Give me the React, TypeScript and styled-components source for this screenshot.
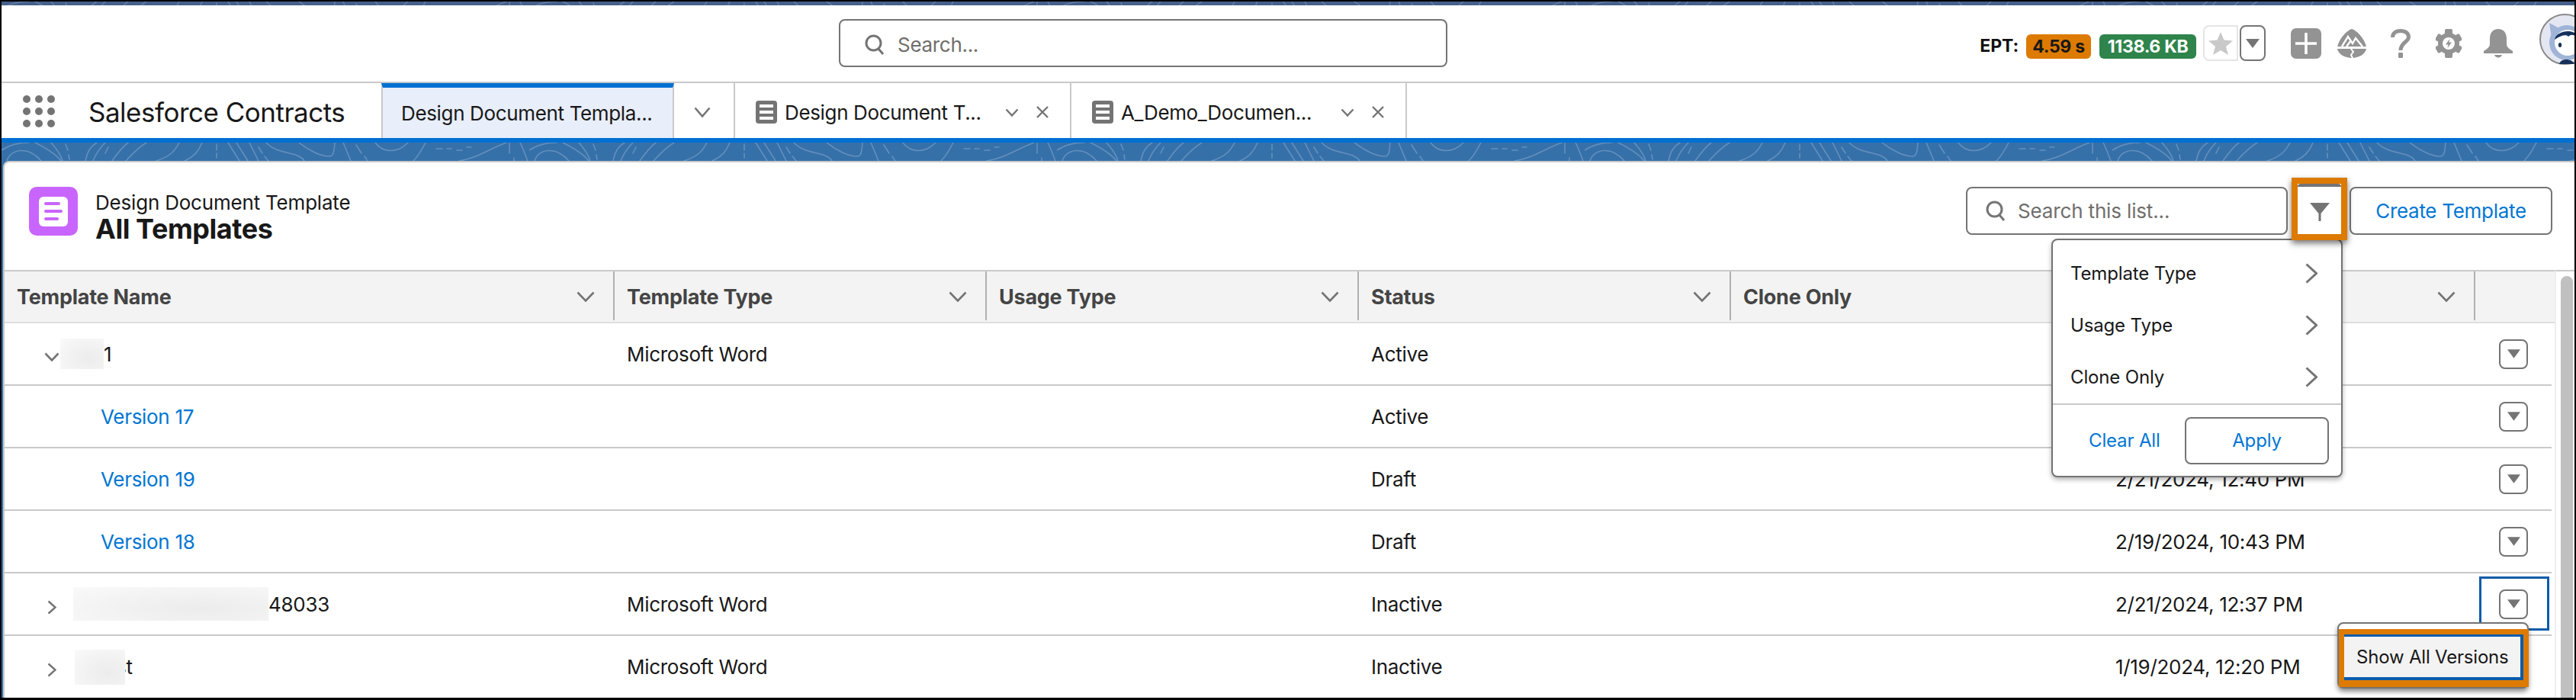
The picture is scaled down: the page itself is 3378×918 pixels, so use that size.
import React from "react";
import styled, { createGlobalStyle } from "styled-components";

const Global = createGlobalStyle`
  html, body { margin: 0; padding: 0; background: #000; }
  * { box-sizing: border-box; }
  body { font-family: Inter, "Liberation Sans", sans-serif; color: #181818; }
`;

const Page = styled.div`
  width: 3378px; height: 918px; padding: 2px 2px 3px 2px; background: #000;
  display: flex; flex-direction: column; overflow: hidden; font-size: 26px; letter-spacing: -0.3px;
`;
const Strip = styled.div`height: 5px; background: #45608a; overflow: hidden; flex: none;`;
const TopBar = styled.header`
  height: 102px; flex: none; background: #fff; border-bottom: 2px solid #c9c9c9;
  display: flex; align-items: flex-start; overflow: hidden; position: relative;
`;
const GlobalSearch = styled.div`
  width: 798px; height: 63px; margin: 18px 0 0 1098px; border: 2px solid #747474; border-radius: 8px;
  display: flex; align-items: center; gap: 17px; padding: 3px 0 0 32px; color: #706e6b;
`;
const Metrics = styled.div`
  margin-left: auto; display: flex; align-items: flex-start; padding-top: 26px; margin-right: -21px;
`;
const Ept = styled.span`
  font-weight: 700; font-size: 23px; letter-spacing: -0.1px; margin-top: 13px; margin-right: 10px; line-height: 28px; color: #111;
`;
const Pill = styled.span<{ $bg: string; $fg: string; $w: number }>`
  width: ${p => p.$w}px; height: 32px; margin-top: 12px; border-radius: 6px; background: ${p => p.$bg}; color: ${p => p.$fg};
  display: flex; align-items: center; justify-content: center; font-weight: 700; font-size: 23px; letter-spacing: -0.3px;
`;
const PillGap = styled.span`width: 11px;`;
const StarBox = styled.span`
  width: 46px; height: 47px; margin-left: 9px; border: 2px solid #e5e5e5; border-radius: 8px 0 0 8px;
  display: flex; align-items: center; justify-content: center;
`;
const CaretBox = styled.span`
  width: 34px; height: 47px; margin-left: 2px; border: 2px solid #747474; border-radius: 8px;
  display: flex; align-items: center; justify-content: center;
`;
const IconSlot = styled.span<{ $ml: number; $mt: number }>`
  display: flex; margin-left: ${p => p.$ml}px; margin-top: ${p => p.$mt}px;
`;
const TabBar = styled.nav`height: 72px; flex: none; background: #fff; display: flex; align-items: stretch;`;
const Launcher = styled.div`
  width: 498px; display: flex; align-items: center; padding: 4px 0 0 28px; flex: none;
`;
const Dots = styled.div`display: grid; grid-template-columns: repeat(3, 10px); gap: 6px; margin-top: -3px;`;
const Dot = styled.i`width: 10px; height: 10px; border-radius: 50%; background: #747474; display: block;`;
const AppName = styled.div`margin-left: 44px; font-size: 35px; letter-spacing: -0.5px; white-space: nowrap; color: #181818;`;
const ActiveTab = styled.div`
  width: 384px; flex: none; background: #e8eefa; border-top: 6px solid #0070d2; border-left: 2px solid #c9c9c9; border-right: 2px solid #c9c9c9;
  display: flex; align-items: center; padding-left: 24px; white-space: nowrap; letter-spacing: -0.35px;
`;
const OverflowTab = styled.div`
  width: 80px; flex: none; border-right: 2px solid #c9c9c9; display: flex; align-items: center; justify-content: center; padding: 4px 4px 0 0;
`;
const Tab = styled.div<{ $w: number }>`
  width: ${p => p.$w}px; flex: none; border-right: 2px solid #c9c9c9; display: flex; align-items: center; padding: 4px 27px 0 27px; white-space: nowrap; letter-spacing: -0.35px;
`;
const TabIcon = styled.div`
  width: 28px; height: 30px; border-radius: 4px; background: #747474; display: flex; flex-direction: column; justify-content: center; gap: 4px; padding: 0 5px; flex: none;
`;
const TabIconLine = styled.i`height: 4px; background: #fff; display: block;`;
const TabLabel = styled.span`margin-left: 10px; flex: 1;`;
const TabClose = styled.span`margin-left: 22px; display: flex;`;
const BlueLine = styled.div`height: 6px; background: #0070d2; flex: none;`;
const Workspace = styled.main`flex: 1; display: flex; flex-direction: column; background: #3670a9; padding-left: 2px; min-height: 0;`;
const Banner = styled.div`height: 24px; flex: none; overflow: hidden; margin-left: -2px;`;
const Card = styled.section`
  flex: 1; min-height: 0; background: #fff; border-top: 2px solid #c9c9c9; border-left: 2px solid #c9c9c9; border-top-left-radius: 8px;
  display: flex; flex-direction: column; position: relative;
`;
const CardHeader = styled.div`
  height: 141px; flex: none; display: flex; align-items: flex-start; padding: 32px 29px 0 32px;
`;
const ObjectIcon = styled.div`
  width: 64px; height: 64px; border-radius: 10px; background: #c965ff; display: flex; align-items: center; justify-content: center; flex: none;
`;
const ObjectIconInner = styled.div`
  width: 38px; height: 39px; border-radius: 6px; background: #fff; display: flex; flex-direction: column; justify-content: center; gap: 6px; padding-left: 7px;
`;
const ObjectLine = styled.i<{ $w: number }>`height: 4px; width: ${p => p.$w}px; border-radius: 2px; background: #c965ff; display: block;`;
const TitleBlock = styled.div`margin: 4px 0 0 23px;`;
const Subtitle = styled.div`font-size: 26px; line-height: 34px; letter-spacing: -0.2px;`;
const Title = styled.h1`margin: 0; font-size: 36px; line-height: 34px; font-weight: 700; letter-spacing: -0.45px;`;
const Toolbar = styled.div`margin-left: auto; display: flex; align-items: flex-start;`;
const ListSearch = styled.div`
  width: 422px; height: 63px; border: 2px solid #747474; border-radius: 8px; display: flex; align-items: center; gap: 16px; padding-left: 24px; color: #706e6b; letter-spacing: -0.15px;
`;
const FilterHighlight = styled.div`
  width: 73px; height: 82px; margin: -12px 3px 0 5px; border: 8px solid #dd7a01; background: #fff; position: relative; z-index: 3;
  box-shadow: 0 4px 8px rgba(0,0,0,.55);
  display: flex; align-items: center; justify-content: center; flex: none;
`;
const FilterInner = styled.div`
  width: 100%; height: 100%; border-top: 4px solid #747474; border-radius: 4px; display: flex; align-items: center; justify-content: center; padding-top: 3px;
`;
const CreateButton = styled.button`
  width: 266px; height: 63px; border: 2px solid #747474; border-radius: 8px; background: #fff; color: #0176d3; font: inherit; letter-spacing: inherit;
`;
const TableZone = styled.div`flex: 1; min-height: 0; display: flex;`;
const Table = styled.div`width: 3344px; flex: none; display: flex; flex-direction: column;`;
const HeaderRow = styled.div`
  display: grid; grid-template-columns: 800px repeat(5, 488px) 104px; height: 70px; background: #f3f3f3; border-top: 2px solid #c9c9c9; border-bottom: 2px solid #ddd; flex: none;
`;
const HeaderCell = styled.div<{ $sep?: boolean }>`
  height: 64px; display: flex; align-items: center; justify-content: space-between; padding: 2px 24px 0 16px;
  border-right: ${p => (p.$sep === false ? "none" : "2px solid #b0b0b0")}; font-weight: 700; color: #444; font-size: 27px; letter-spacing: -0.25px;
`;
const Row = styled.div`
  display: grid; grid-template-columns: 800px repeat(5, 488px) 1fr; height: 82px; border-bottom: 2px solid #c9c9c9; width: 3340px; flex: none; position: relative; align-items: center;
  &:last-child { border-bottom: none; height: 81px; }
`;
const Cell = styled.div`padding-left: 16px; white-space: nowrap;`;
const NameCell = styled.div<{ $pl: number }>`display: flex; align-items: center; padding-left: ${p => p.$pl}px; white-space: nowrap;`;
const Link = styled.a`color: #0176d3; margin-left: 126px;`;
const Toggle = styled.span<{ $w: number; $dy: number }>`
  display: flex; justify-content: center; width: ${p => p.$w}px; flex: none; transform: translateY(${p => p.$dy}px);
`;
const Blurred = styled.span<{ $w: number; $h: number; $ml: number; $mr: number }>`
  width: ${p => p.$w}px; height: ${p => p.$h}px; margin-left: ${p => p.$ml}px; margin-right: ${p => p.$mr}px; position: relative; z-index: 1; flex: none;
  background: radial-gradient(ellipse at 65% 65%, #ececec 0%, #f3f3f3 55%, #fafafa 100%);
`;
const ActionCell = styled.div`display: flex; justify-content: flex-end; padding-right: 31px; position: relative; height: 100%; align-items: center;`;
const RowButton = styled.button`
  width: 38px; height: 39px; padding: 0; border: 2px solid #747474; border-radius: 8px; background: #fff; display: flex; align-items: center; justify-content: center; position: relative;
`;
const FocusBox = styled.div`position: absolute; left: 5px; top: 4px; width: 92px; height: 71px; border: 3px solid #0b5cab;`;
const VersionsMenu = styled.div`
  position: absolute; right: 30px; top: 64px; width: 251px; height: 87px; z-index: 4; background: #fff; border: 2px solid #747474; border-radius: 8px; box-shadow: 0 4px 6px rgba(0,0,0,.45); padding-top: 6px;
`;
const VersionsHighlight = styled.div`
  width: 249px; height: 76px; border: 7px solid #dd7a01; border-bottom-width: 9px; background: #fff; margin-top: 1px;
`;
const VersionsItem = styled.div`
  height: 100%; border-top: 3px solid #0b5cab; border-bottom: 4px solid #0b5cab; border-right: 4px solid #0b5cab; background: #f3f3f3;
  display: flex; align-items: center; padding-left: 16px; font-size: 24px; letter-spacing: -0.2px; white-space: nowrap; color: #181818;
`;
const Track = styled.div`
  flex: 1; border-top: 2px solid #c9c9c9; border-left: 2px solid #eee; padding: 6px 0 0 6px; display: flex; min-width: 0; background: #fff;
`;
const Thumb = styled.div`width: 16px; background: #c0c0c0; border-radius: 8px 8px 0 0;`;
const FilterMenu = styled.div`
  position: absolute; left: 2684px; top: 100px; width: 382px; height: 313px; z-index: 2; background: #fff; border: 2px solid #747474; border-radius: 8px;
  box-shadow: 0 3px 6px rgba(0,0,0,.3); padding-top: 9px; display: flex; flex-direction: column; font-size: 24px; letter-spacing: -0.15px;
`;
const FilterItem = styled.div`height: 68px; flex: none; display: flex; align-items: center; justify-content: space-between; padding: 0 31px 0 23px;`;
const MenuFooter = styled.div`
  flex: 1; margin-top: 1px; border-top: 2px solid #c9c9c9; display: flex; align-items: center; justify-content: space-between; padding: 0 16px 0 47px;
`;
const ClearLink = styled.a`color: #0176d3;`;
const ApplyButton = styled.button`
  width: 189px; height: 62px; border: 2px solid #747474; border-radius: 8px; background: #fff; color: #0176d3; font: inherit; letter-spacing: inherit;
`;

const Contour = ({ id, stroke }: { id: string; stroke: string }) => (
  <svg width="3378" height="24" style={{ display: "block" }}>
    <defs>
      <pattern id={id} width="692" height="24" patternUnits="userSpaceOnUse">
        <g fill="none" stroke={stroke} strokeWidth="1.6" strokeLinecap="round">
          <path d="M7 24C12 8 35 4 52 24M0 10C12 2 24 0 36 0M44 0C56 6 72 16 78 24" />
          <path d="M65 0C72 8 78 16 80 24M84 2L87 10M88 16L89 22" />
          <path d="M110 24C112 12 118 4 125 0M120 24C124 14 130 6 136 0M136 14L140 6M145 24C152 14 158 6 166 0M163 24C172 14 180 6 190 0" />
          <path d="M203 24C222 18 228 10 233 0M240 24C255 18 260 8 263 0M282 2V10M282 14V20" />
          <path d="M297 0L312 24M308 0L323 24M325 0L337 24M337 6L342 14M345 18L350 24" />
          <path d="M347 0C360 14 380 12 390 18C394 20 396 22 397 24M390 0C405 12 420 18 430 18C436 18 436 10 437 0" />
          <path d="M448 0L458 24M465 3L472 14M476 18L480 24" />
          <path d="M490 0C500 14 520 14 533 0M540 24C548 16 552 8 556 0" />
          <path d="M570 8H578M584 8H590M597 10H604M610 6H616" />
          <path d="M600 24C625 20 640 8 662 0M666 0V14M672 24V20M680 0C684 8 686 14 690 24" />
        </g>
      </pattern>
    </defs>
    <rect width="3378" height="24" fill={`url(#${id})`} />
  </svg>
);

const Chevron = ({ dir = "down", w, h, sw = 3 }: { dir?: "down" | "right"; w: number; h: number; sw?: number }) => (
  <svg width={w} height={h} viewBox={`0 0 ${w} ${h}`} fill="none" stroke="#747474" strokeWidth={sw} style={{ display: "block", flex: "none" }}>
    {dir === "down" ? (
      <path d={`M1.5 1.5L${w / 2} ${h - 1.5}L${w - 1.5} 1.5`} />
    ) : (
      <path d={`M1.5 1.5L${w - 1.5} ${h / 2}L1.5 ${h - 1.5}`} />
    )}
  </svg>
);
const Close = () => (
  <svg width="18" height="16" viewBox="0 0 18 16" fill="none" stroke="#747474" strokeWidth="2.4" style={{ display: "block" }}>
    <path d="M2 1L16 15M16 1L2 15" />
  </svg>
);
const SearchIcon = () => (
  <svg width="26" height="27" viewBox="0 0 26 27" fill="none" stroke="#747474" strokeWidth="3" style={{ display: "block", flex: "none" }}>
    <circle cx="11.5" cy="11.5" r="9.5" />
    <path d="M18 19L24 26" />
  </svg>
);
const Caret = ({ w = 18, h = 12 }: { w?: number; h?: number }) => (
  <svg width={w} height={h} viewBox="0 0 18 12" style={{ display: "block" }}>
    <path d="M0 0H18L9 12Z" fill="#747474" />
  </svg>
);
const Star = () => (
  <svg width="32" height="30" viewBox="0 0 32 30" style={{ display: "block" }}>
    <path d="M16 0L20.5 10.5L32 11.5L23 19L26 30L16 24L6 30L9 19L0 11.5L11.5 10.5Z" fill="#c9c9c9" />
  </svg>
);
const PlusIcon = () => (
  <svg width="40" height="40" viewBox="0 0 40 40" style={{ display: "block" }}>
    <rect width="40" height="40" rx="7" fill="#939393" />
    <path d="M20 6V34M6 20H34" stroke="#fff" strokeWidth="3.6" />
  </svg>
);
const TrailIcon = () => (
  <svg width="38" height="38" viewBox="0 0 38 38" style={{ display: "block" }}>
    <path d="M19 0C12 2 3 12 0 23H38C35 12 26 2 19 0Z" fill="#939393" />
    <path d="M0 26H38C37 33 28 38 19 38C10 38 1 33 0 26Z" fill="#939393" />
    <path d="M6 23L14 10L20 19L24 12L33 23M12 23L18 15" fill="none" stroke="#fff" strokeWidth="2.4" />
    <path d="M18 26L21 30L18 34L20 38" fill="none" stroke="#fff" strokeWidth="2" />
  </svg>
);
const HelpIcon = () => (
  <svg width="26" height="38" viewBox="0 0 26 38" style={{ display: "block" }}>
    <path d="M2.5 11C2.5 5 7 2.5 13 2.5C19.5 2.5 23.5 6 23.5 10.5C23.5 17 13 17.5 13 28" fill="none" stroke="#939393" strokeWidth="5" />
    <rect x="10" y="31" width="6" height="7" rx="1" fill="#939393" />
  </svg>
);
const GearIcon = () => (
  <svg width="34" height="38" viewBox="-17 -19 34 38" style={{ display: "block" }}>
    <g fill="#939393">
      <circle r="14" />
      <rect x="-5" y="-19" width="10" height="38" rx="2" />
      <rect x="-5" y="-19" width="10" height="38" rx="2" transform="rotate(60) scale(.96)" />
      <rect x="-5" y="-19" width="10" height="38" rx="2" transform="rotate(120) scale(.96)" />
    </g>
    <circle r="8" fill="#fff" />
    <path d="M1.5 -6L-4 1.5H-.5L-1.5 6L4 -1.5H.5Z" fill="#939393" />
  </svg>
);
const BellIcon = () => (
  <svg width="38" height="38" viewBox="0 0 38 38" style={{ display: "block" }}>
    <path d="M19 0C12 0 8 5 8 13V20C8 24 4 26 0 29V32H38V29C34 26 30 24 30 20V13C30 5 26 0 19 0Z" fill="#939393" />
    <path d="M14 34H24C23 38.5 15 38.5 14 34Z" fill="#939393" />
  </svg>
);
const Avatar = () => (
  <svg width="67" height="67" viewBox="0 0 67 67" style={{ display: "block" }}>
    <circle cx="33.5" cy="33.5" r="32.5" fill="#e4e7f1" stroke="#8a8a8a" strokeWidth="2" />
    <path d="M13 12L24 18L16 32Z" fill="#9fb4d6" />
    <circle cx="36" cy="38" r="23" fill="#9fb4d6" />
    <circle cx="37" cy="38" r="17" fill="#fff" />
    <path d="M20 34C22 22 46 18 54 32C46 28 42 26 38 30C36 27 28 28 20 34Z" fill="#16325c" />
    <ellipse cx="27" cy="41" rx="2.2" ry="3" fill="#16325c" />
    <path d="M26 66C28 58 42 58 46 66Z" fill="#16325c" />
  </svg>
);
const Funnel = () => (
  <svg width="26" height="24" viewBox="0 0 26 24" style={{ display: "block" }}>
    <path d="M0 0H26L14.5 14V24H11.5V14Z" fill="#747474" />
  </svg>
);

const headers = ["Template Name", "Template Type", "Usage Type", "Status", "Clone Only", ""];
const dots = Array.from({ length: 9 });

type RowData = { name: React.ReactNode; type: string; status: string; date: string; extra?: boolean };
const rows: RowData[] = [
  {
    name: (
      <NameCell $pl={50}>
        <Toggle $w={24} $dy={4}><Chevron w={20} h={12} sw={2.6} /></Toggle>
        <Blurred $w={57} $h={40} $ml={-1} $mr={0} />
        1
      </NameCell>
    ),
    type: "Microsoft Word", status: "Active", date: "",
  },
  { name: <NameCell $pl={0}><Link>Version 17</Link></NameCell>, type: "", status: "Active", date: "" },
  { name: <NameCell $pl={0}><Link>Version 19</Link></NameCell>, type: "", status: "Draft", date: "2/21/2024, 12:40 PM" },
  { name: <NameCell $pl={0}><Link>Version 18</Link></NameCell>, type: "", status: "Draft", date: "2/19/2024, 10:43 PM" },
  {
    name: (
      <NameCell $pl={50}>
        <Toggle $w={24} $dy={4}><Chevron dir="right" w={12} h={19} sw={2.4} /></Toggle>
        <Blurred $w={256} $h={44} $ml={16} $mr={0} />
        48033
      </NameCell>
    ),
    type: "Microsoft Word", status: "Inactive", date: "2/21/2024, 12:37 PM", extra: true,
  },
  {
    name: (
      <NameCell $pl={50}>
        <Toggle $w={24} $dy={4}><Chevron dir="right" w={12} h={19} sw={2.4} /></Toggle>
        <Blurred $w={66} $h={46} $ml={18} $mr={-12} />
        st
      </NameCell>
    ),
    type: "Microsoft Word", status: "Inactive", date: "1/19/2024, 12:20 PM",
  },
];

export default function App() {
  return (
    <Page>
      <Global />
      <Strip><Contour id="strip" stroke="rgba(125,145,180,.55)" /></Strip>
      <TopBar>
        <GlobalSearch><SearchIcon /><span>Search...</span></GlobalSearch>
        <Metrics>
          <Ept>EPT:</Ept>
          <Pill $bg="#dd7a01" $fg="#181818" $w={85}>4.59 s</Pill>
          <PillGap />
          <Pill $bg="#2e844a" $fg="#fff" $w={127}>1138.6 KB</Pill>
          <StarBox><Star /></StarBox>
          <CaretBox><Caret /></CaretBox>
          <IconSlot $ml={33} $mt={4}><PlusIcon /></IconSlot>
          <IconSlot $ml={21} $mt={5}><TrailIcon /></IconSlot>
          <IconSlot $ml={32} $mt={5}><HelpIcon /></IconSlot>
          <IconSlot $ml={33} $mt={5}><GearIcon /></IconSlot>
          <IconSlot $ml={29} $mt={5}><BellIcon /></IconSlot>
          <IconSlot $ml={35} $mt={-15}><Avatar /></IconSlot>
        </Metrics>
      </TopBar>
      <TabBar>
        <Launcher>
          <Dots>{dots.map((_, i) => <Dot key={i} />)}</Dots>
          <AppName>Salesforce Contracts</AppName>
        </Launcher>
        <ActiveTab>Design Document Templa...</ActiveTab>
        <OverflowTab><Chevron w={22} h={14} sw={2.6} /></OverflowTab>
        <Tab $w={441}>
          <TabIcon><TabIconLine /><TabIconLine /><TabIconLine /></TabIcon>
          <TabLabel>Design Document T...</TabLabel>
          <Chevron w={18} h={11} sw={2.4} />
          <TabClose><Close /></TabClose>
        </Tab>
        <Tab $w={440}>
          <TabIcon><TabIconLine /><TabIconLine /><TabIconLine /></TabIcon>
          <TabLabel>A_Demo_Documen...</TabLabel>
          <Chevron w={18} h={11} sw={2.4} />
          <TabClose><Close /></TabClose>
        </Tab>
      </TabBar>
      <BlueLine />
      <Workspace>
        <Banner><Contour id="banner" stroke="rgba(255,255,255,.22)" /></Banner>
        <Card>
          <CardHeader>
            <ObjectIcon>
              <ObjectIconInner>
                <ObjectLine $w={21} /><ObjectLine $w={24} /><ObjectLine $w={19} />
              </ObjectIconInner>
            </ObjectIcon>
            <TitleBlock>
              <Subtitle>Design Document Template</Subtitle>
              <Title>All Templates</Title>
            </TitleBlock>
            <Toolbar>
              <ListSearch><SearchIcon /><span>Search this list...</span></ListSearch>
              <FilterHighlight><FilterInner><Funnel /></FilterInner></FilterHighlight>
              <CreateButton>Create Template</CreateButton>
            </Toolbar>
          </CardHeader>
          <TableZone>
            <Table>
              <HeaderRow>
                {headers.map((h, i) => (
                  <HeaderCell key={i}>
                    <span>{h}</span>
                    <Chevron w={24} h={14} sw={2.6} />
                  </HeaderCell>
                ))}
                <HeaderCell $sep={false} />
              </HeaderRow>
              {rows.map((r, i) => (
                <Row key={i}>
                  {r.name}
                  <Cell>{r.type}</Cell>
                  <Cell />
                  <Cell>{r.status}</Cell>
                  <Cell />
                  <Cell>{r.date}</Cell>
                  <ActionCell>
                    {r.extra && <FocusBox />}
                    <RowButton><Caret w={17} h={12} /></RowButton>
                    {r.extra && (
                      <VersionsMenu>
                        <VersionsHighlight>
                          <VersionsItem>Show All Versions</VersionsItem>
                        </VersionsHighlight>
                      </VersionsMenu>
                    )}
                  </ActionCell>
                </Row>
              ))}
            </Table>
            <Track><Thumb /></Track>
          </TableZone>
          <FilterMenu>
            {["Template Type", "Usage Type", "Clone Only"].map(t => (
              <FilterItem key={t}>
                <span>{t}</span>
                <Chevron dir="right" w={16} h={27} sw={3} />
              </FilterItem>
            ))}
            <MenuFooter>
              <ClearLink>Clear All</ClearLink>
              <ApplyButton>Apply</ApplyButton>
            </MenuFooter>
          </FilterMenu>
        </Card>
      </Workspace>
    </Page>
  );
}
